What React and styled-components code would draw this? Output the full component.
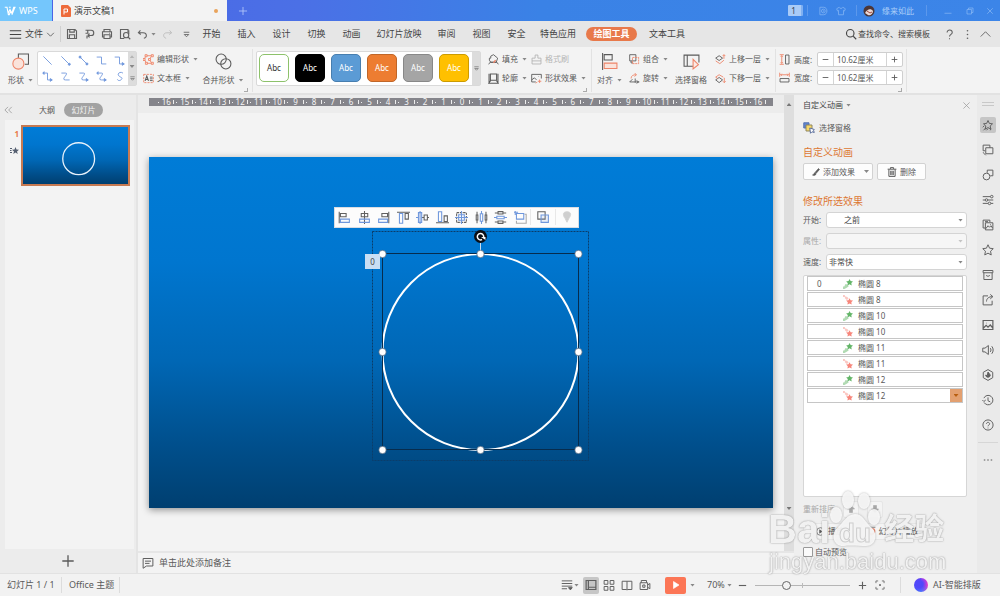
import React from "react";
import styled, { createGlobalStyle, css } from "styled-components";

const SLIDE_W = 624;
const SLIDE_H = 351;

const c = {
  text: "#5a5a5a",
  dark: "#444",
  muted: "#a8a8a8",
  orange: "#e8794a",
  coral: "#ee8468",
  blue: "#6f97dc",
  line: "#d9d9d9",
  panel: "#efefef",
  canvas: "#f3f3f3",
};

const Global = createGlobalStyle`
  *, *::before, *::after { box-sizing: border-box; }
  body {
    margin: 0;
    font-family: "Noto Sans", "Noto Sans CJK SC", sans-serif;
    font-size: 8px;
    line-height: 12px;
    color: ${c.text};
    background: ${c.panel};
  }
  button, input, select {
    font: inherit;
    color: inherit;
    margin: 0;
    padding: 0;
    border: 0;
    background: none;
  }
  h1, h2, p, ul { margin: 0; padding: 0; font-weight: 400; }
  ul { list-style: none; }
`;

/* ---------- icons ---------- */

const O = c.coral;
const star = "M8 2l1.8 3.9 4.2.5-3.1 2.9.8 4.2L8 11.4l-3.7 2.1.8-4.2L2 6.400l4.200-.5z";

const icons = {
  menu: <path d="M1 3.500h14M1 8h14M1 12.500h14" />,
  down: <path d="M2 5l6 6 6-6" />,
  up: <path d="M1 11l7-7 7 7" />,
  save: <path d="M2 2h10l2 2v10H2zM5 2v3.500h6V2M4.500 14V9h7v5" />,
  export: <path d="M2 3h7.500a3.500 3.500 0 010 7H5M5 3v4M2 7h4M5 10l2.500-2.500M5 10l2.500 2.500M4 10v4" />,
  print: <path d="M4 5V2h8v3M4 12H2V5h12v7h-2M4 9h8v5H4zM11 7h1" />,
  preview: <><path d="M7 14H2V2h10v4" /><circle cx="9.500" cy="9.500" r="3.500" /><path d="M12 12l3 3M13 8V3" /></>,
  undo: <path d="M5 2L2 5.500 5.500 8M2 5.500h7c6 0 6 7 1 8" />,
  redo: <path d="M11 2l3 3.500L10.500 8M14 5.500H7c-6 0-6 7-1 8" />,
  more: <path d="M3 4h10M4 8l4 4 4-4z" />,
  search: <><circle cx="7" cy="7" r="5" /><path d="M11 11l4 4" /></>,
  help: <path d="M4.500 5c0-5 7.500-4.500 7.500 0 0 2.800-4 2.800-4 6M8 13.500v1.500" />,
  dots: <g fill="currentColor" stroke="none"><circle cx="8" cy="2.500" r="1.200" /><circle cx="8" cy="8" r="1.200" /><circle cx="8" cy="13.500" r="1.200" /></g>,
  ellipsis: <g fill="currentColor" stroke="none"><circle cx="2.500" cy="8" r="1.500" /><circle cx="8" cy="8" r="1.500" /><circle cx="13.500" cy="8" r="1.500" /></g>,
  plus: <path d="M8 1.500v13M1.500 8h13" />,
  minus: <path d="M1.500 8h13" />,
  close: <path d="M2.500 2.500l11 11M13.500 2.500l-11 11" />,
  minimize: <path d="M1 12.500h14" />,
  restore: <path d="M2 5h9v9H2zM5 5V2h9v9h-3" />,
  collapse: <path d="M8 3L3 8l5 5M14 3L9 8l5 5" />,
  arrowUp: <path d="M8 1l7 7h-4v7H5V8H1z" fill="currentColor" />,
  arrowDown: <path d="M8 15l7-7h-4V1H5v7H1z" fill="currentColor" />,
  skin: <path d="M5 2L1 4.500 2.500 8 4 7v7h8V7l1.500 1L15 4.500 11 2c-1 2.500-5 2.500-6 0z" />,
  doc: <><path d="M3 14V2h6c7 0 7 12 0 12z" /><circle cx="8.500" cy="8" r="3" /><circle cx="8.500" cy="8" r=".5" /></>,
  wps: <path d="M1 3h3l1.500 8L8 6l2.500 5L13 3h2.500M4 3l2 10h1l2-5M10.500 13l4-10M9 3H6.500" strokeWidth="1.500" />,
  shapes: <><path d="M6 6V1h9.500v9.500H12" /><circle cx="6" cy="10" r="5.200" stroke={O} fill="#fae3db" /></>,
  editShape: <><path d="M4 2.500h9L9 8l4 5.500H5L2 8z" stroke={O} /><path d="M12 1h3v3h-3zM12 12h3v3h-3zM0 6.500h3v3H0zM3 1h3v3H3zM3.500 12h3v3h-3zM8 6.500h3v3H8z" fill="#fbe6de" stroke={O} /></>,
  textBox: <><path d="M1 2h14v12H1z" stroke={O} strokeDasharray="3 1.500" /><path d="M3 11.500L5.500 4.500 8 11.500M4 9.500h3" strokeWidth="1.600" /><path d="M10 6h4M10 8.500h4M10 11h4" /></>,
  merge: <><circle cx="5.800" cy="5.800" r="4.800" /><circle cx="10.200" cy="10.200" r="4.800" /></>,
  fill: <><path d="M2 6h2V3l4-2 6 5-2 6H4L2 9zM1 15l2-3h10l2 3" /><path d="M11 9l-3 4" stroke={O} strokeWidth="2" /></>,
  outline: <path d="M3.500 1.500h9v9h-9zM3.500 12v-.500L1 15h14l-2.500-3.500M1.500 1v13M14.500 1v13" strokeWidth="1.500" />,
  painter: <path d="M6 6V1.500h4V6h4.500v8.500h-13V6zM1.500 10h13" />,
  effect: <><path d="M7 13H1V2h14v6M1 10l4-3 3 3M11 5v.5" /><path d="M10 12h5M12.500 9.500v5M7 15l2-2" stroke={O} /></>,
  align: <><path d="M1.500 0v16M3 1.500h7.500v5H3z" /><path d="M3 9.500h12v5H3z" stroke={O} fill="#fae3db" /></>,
  group: <><path d="M1 1h9v9H1zM3 10v3h3" /><path d="M5 5h9v9H5z" stroke={O} strokeDasharray="3 1" /></>,
  rotate: <><path d="M3 8c0-4 3-5.500 7-5.500M8 0l3 2.500L8 5" stroke={O} /><path d="M15 13H1l4-4M9 8v6M11 11l3 2-3 2" /></>,
  pane: <><path d="M10 12.500H1V2h14v7M4 2v10.500" /><path d="M9.500 6v9l5-4z" stroke={O} fill="#fbeae4" /></>,
  raise: <><path d="M1 6l5-3.500L11 6 6 9.500z" /><path d="M1 10l6 4 6-5M13 7V1M11 3l2-2 2 2" stroke={O} /></>,
  lower: <><path d="M1 6l5-3.500L12 6" stroke={O} /><path d="M1 10l5-3.500 5 3.500-5 4z" /><path d="M1 6l3 2M13.500 7v7M11.500 12l2 2 2-2" stroke={O} /></>,
  height: <><path d="M9.500 1.500h5v13h-5z" /><path d="M1 1h6M1 15h6M4 2v12M2.500 4L4 2.500 5.500 4M2.500 12L4 13.500 5.500 12" stroke={O} /></>,
  width: <><path d="M1.500 9.500h13v5h-13z" /><path d="M1 1v6M15 1v6M2 4h12M4 2.500L2.500 4 4 5.500M12 2.500L13.500 4 12 5.500" stroke={O} /></>,
  l1: <path d="M2 2l12 12" />,
  l2: <><path d="M2 2l11 11" /><circle cx="13.500" cy="13.500" r="1.500" fill="currentColor" /></>,
  l3: <><path d="M3 3l10 10" /><circle cx="3" cy="3" r="1.500" fill="currentColor" /><circle cx="13" cy="13" r="1.500" fill="currentColor" /></>,
  l4: <path d="M1 3h7v10h7" />,
  l5: <><path d="M1 3h7v10h6" /><path d="M12 11l3 2-3 2z" fill="currentColor" /></>,
  l6: <><path d="M2 3h6v10h6" /><path d="M12 11l3 2-3 2zM3 1L1 3l2 2z" fill="currentColor" /></>,
  l7: <path d="M2 3h6c6 0-8 10 0 10h6" />,
  l8: <><path d="M2 3h6c6 0-8 10 0 10h5" /><path d="M12 11l3 2-3 2z" fill="currentColor" /></>,
  l9: <><path d="M3 3h5c6 0-8 10 0 10h5" /><path d="M12 11l3 2-3 2zM3 1L1 3l2 2z" fill="currentColor" /></>,
  l10: <path d="M13 3c-4-3-9 1-6 4s6 2 4 5-6 2-6 0" />,
  brush: <><path d="M6 9l7-8 2 2-7 8z" fill="currentColor" /><path d="M6 10c-3 0-2 4-5 4 3 2 7 0 7-2z" fill="currentColor" /></>,
  trash: <path d="M1 3.500h14M5.500 3V1h5v2M3 4v11h10V4M6 6v7M8 6v7M10 6v7" strokeWidth="1.600" />,
  panes: <><path d="M1 1h7v7H1z" fill="#5f83cf" stroke="#5875b0" /><path d="M4 4h8v8H4z" fill="#f7d868" stroke="#8c8460" /><path d="M9 8l1 7 2-2 3 1-1-3 1-1z" fill="#fff" stroke="#556a99" /></>,
  railAnim: <><path d={star} /><path d="M1 11l2-2M2 15l3-3M6 15l2-2M11 15l1-2" /></>,
  railCopy: <path d="M4 9H1.500V1.500h9V5M5 5h9.500v8H5zM3 13l-1.500-2M5 15l-2-2" />,
  railShape: <><path d="M7 5V1.500h7.500v7.500H11" /><circle cx="6" cy="10" r="4.500" /></>,
  railSet: <><path d="M1 3.500h10M1 8h3M8 8h7M1 12.500h7M12 12.500h3" /><circle cx="13" cy="3.500" r="1.700" /><circle cx="6" cy="8" r="1.700" /><circle cx="10" cy="12.500" r="1.700" /></>,
  railPics: <path d="M4 12H1.500V1.500h9V4M4.500 5h10v9.500h-10zM5 13l3-4 2 2 2-2 2 3M11 7.500h1M4 3.500h4" />,
  railStar: <path d="M8 1l2.100 4.600 4.900.6-3.600 3.400.9 5L8 12.200l-4.300 2.400.9-5L1 6.200l4.900-.6z" />,
  railBox: <path d="M1.500 2h13v3h-13zM2.500 5v9h11V5M5.500 8.500c1.500 1.500 3.500 1.500 5 0" />,
  railShare: <path d="M8 2.500H1.500v12h12V9M6 10c0-4 3-6.500 8-6.500M11 .5l3.500 3-3.500 3" />,
  railImage: <path d="M1.500 2h13v12h-13zM2 12l3.500-3.500L8 11l3-3 3.500 4M6 5.500h.5" strokeWidth="1.600" />,
  railSound: <path d="M1 5.500h3L8.500 2v12L4 10.500H1zM11 5.500c1.300 1.500 1.300 3.500 0 5M13 3c2.500 3 2.500 7 0 10" />,
  railHex: <><path d="M8 .8l6.300 3.600v7.200L8 15.200l-6.300-3.600V4.400z" /><path d="M8 4l3 4c0 4-6 4-6 0l2 1z" fill="currentColor" /></>,
  railClock: <path d="M2.500 5.500a6.300 6.300 0 11.3 5.800M.5 8l2 2 2.500-2M8 4.500V9l3 1.500" />,
  railHelp: <><circle cx="8" cy="8" r="6.800" /><path d="M6 6.500c0-3 4.200-2.500 4.200 0 0 1.500-2.200 1.500-2.200 3.200M8 11.500v1" /></>,
  note: <path d="M1.500 2h13v10H6l-4.500 3zM4 5.500h8M4 8.500h6" />,
  lines: <><path d="M1 2.500h14M1 6h14M1 9.500h14M1 13h7" /><path d="M10 11.500h5l-2.500 3z" fill="currentColor" /></>,
  normal: <path d="M1.500 2h13v12h-13zM4.500 2v12M4.500 11h10" strokeWidth="1.600" />,
  grid: <path d="M1.500 2h5v5h-5zM9.500 2h5v5h-5zM1.500 10h5v5h-5zM9.500 10h5v5h-5z" />,
  book: <path d="M8 3v11.500M8 3H1.500v11H7l1 .8 1-.8h5.500V3z" />,
  camera: <path d="M3 5V2h7v3M1.500 5h10v9h-10zM11.500 8l3-2v7l-3-2M5 8h3v3H5z" />,
  fit: <><path d="M1.500 5V1.500H5M11 1.500h3.500V5M14.500 11v3.500H11M5 14.500H1.500V11" /><circle cx="8" cy="8" r="1" fill="currentColor" /></>,
  play: <path d="M3 1v14l11-7z" fill="currentColor" />,
  playRing: <><circle cx="8" cy="8" r="6.800" /><path d="M6.500 5v6l4-3z" fill="currentColor" /></>,
  screen: <><path d="M1 2h14M3 2v8h3M8 13v2" stroke="#666" /><circle cx="9.500" cy="8.500" r="4.500" stroke="#ee8468" strokeWidth="2" /></>,
  tLeft: <><path d="M1.500 1v14M3 3h7v4H3z" /><path d="M3 10h11v4H3z" stroke={c.blue} /></>,
  tCenter: <><path d="M8 0v16M4 3h8v4H4z" /><path d="M2 10h12v4H2z" stroke={c.blue} /></>,
  tRight: <><path d="M14.500 1v14M6 3h7v4H6z" /><path d="M2 10h11v4H2z" stroke={c.blue} /></>,
  tTop: <><path d="M0 1.500h16M10 3h4v7h-4z" /><path d="M3 3h4v12H3z" stroke={c.blue} /></>,
  tMiddle: <><path d="M7 8h3M10 5h4v6h-4zM14 8h2" /><path d="M3 2h4v12H3zM0 8h3M5 0v16" stroke={c.blue} /></>,
  tBottom: <><path d="M0 14.500h16M10 6h4v7h-4z" /><path d="M3 1h4v12H3z" stroke={c.blue} /></>,
  tCross: <><path d="M2 2h12v12H2z" strokeDasharray="3 1" /><path d="M8 0v16M0 8h16M4.500 4.500h7v7h-7z" stroke={c.blue} /></>,
  tDistH: <><path d="M1.500 5h2v6h-2zM12.500 5h2v6h-2zM2.500 1v4M2.500 11v4M13.500 1v4M13.500 11v4" /><path d="M6.500 3.500h3v9h-3zM8 0v3M8 13v3" stroke={c.blue} /></>,
  tDistV: <><path d="M5 .8h6v3H5zM5 12.200h6v3H5zM1 2.500h4M11 2.500h4M1 13.500h4M11 13.500h4" /><path d="M3.500 6.500h9v3h-9zM0 8h3M13 8h3" stroke={c.blue} /></>,
  tCrop: <><path d="M3 12v3h12V4h-2" stroke="#aaa" /><path d="M3 3h9v7H3zM0 1.500h5M1.500 0v5" stroke={c.blue} /></>,
  tGroup: <><path d="M1 1h9v9H1z" /><path d="M5 5h9v9H5z" stroke={c.blue} fill="#7fa5e022" /></>,
  bulb: <path d="M8 1c-7 0-5 6-2.500 9L8 15l2.500-5C13 7 15 1 8 1z" fill="#cfcfcf" stroke="#d4d4d4" />,
};

const Svg = styled.svg`
  display: block;
  flex: none;
  fill: none;
  stroke: currentColor;
  stroke-width: ${(p) => p.$stroke || 1.3};
`;

const Icon = ({ name, size = 12, stroke }) => (
  <Svg width={size} height={size} viewBox="0 0 16 16" $stroke={stroke} aria-hidden="true">
    {icons[name]}
  </Svg>
);

const Caret = styled.i`
  flex: none;
  width: 5px;
  height: 3px;
  background: ${(p) => p.$color || "#888"};
  clip-path: ${(p) => (p.$up ? "polygon(50% 0, 100% 100%, 0 100%)" : "polygon(0 0, 100% 0, 50% 100%)")};
`;

/* ---------- shell ---------- */

const Shell = styled.div`
  display: flex;
  flex-direction: column;
  min-height: 100vh;
  overflow: hidden;
`;
const Spacer = styled.div`
  flex: 1;
`;
const Gap = styled.i`
  flex: none;
  width: ${(p) => p.$w}px;
`;
const Divider = styled.i`
  flex: none;
  width: 1px;
  height: ${(p) => p.$h || 16}px;
  background: ${(p) => p.$color || "#dcdcdc"};
`;
const IconButton = styled.button`
  display: flex;
  align-items: center;
  justify-content: center;
  flex: none;
  width: ${(p) => p.$w || 18}px;
  height: ${(p) => p.$h || 16}px;
  color: ${(p) => p.$color || "#606060"};
  background: ${(p) => (p.$active ? "#c6c6c6" : "none")};
  border-radius: 2px;
`;

const TitleBar = styled.header`
  display: flex;
  align-items: center;
  height: 21px;
  background: linear-gradient(90deg, #4a62e6 0, #4b70e6 30%, #3a82e6 54%, #3c85e8 100%);
  color: #a9cdf8;
`;
const Brand = styled.button`
  display: flex;
  align-items: center;
  gap: 3px;
  width: 52px;
  height: 21px;
  padding-left: 4px;
  color: #fff;
  font-size: 9px;
  background: #74c6fc;
`;
const DocTab = styled.div`
  display: flex;
  align-items: center;
  gap: 3px;
  width: 174px;
  height: 21px;
  margin-left: 1px;
  padding: 0 9px 0 8px;
  font-size: 9px;
  color: ${c.dark};
  background: #f3f3f3;
`;
const Dot = styled.i`
  width: 4px;
  height: 4px;
  border-radius: 50%;
  background: #e9a35c;
`;
const Count = styled.span`
  width: 15px;
  height: 11px;
  margin-right: 4px;
  padding-right: 2px;
  border-right: 2px solid #7fb0f2;
  border-radius: 1px;
  text-align: center;
  line-height: 11px;
  color: #345;
  background: #a9cbf7;
`;
const User = styled.button`
  display: flex;
  align-items: center;
  gap: 7px;
  width: 69px;
  padding-left: 6px;
`;

const MenuBar = styled.nav`
  display: flex;
  align-items: center;
  height: 26px;
  padding: 0 6px 0 9px;
  font-size: 9px;
  color: ${c.dark};
  background: #e6e6e6;
`;
const FileButton = styled.button`
  display: flex;
  align-items: center;
  gap: 3px;
  width: 51px;
`;
const MenuTab = styled.button`
  width: ${(p) => ({ 2: 35, 4: 48, 5: 60 }[p.$chars])}px;
  white-space: nowrap;
  text-align: center;
  ${(p) =>
    p.$active &&
    css`
      width: 51px;
      height: 14px;
      margin: 0 6px 0 4px;
      border-radius: 7px;
      color: #fff;
      font-weight: 700;
      background: ${c.orange};
    `}
`;
const Search = styled.button`
  display: flex;
  align-items: center;
  gap: 1px;
  width: 95px;
  font-size: 8px;
  white-space: nowrap;
`;

/* ---------- ribbon ---------- */

const Ribbon = styled.section`
  display: flex;
  height: 48px;
  border-bottom: 2px solid #e2e2e2;
  background: #f3f3f3;
`;
const Group = styled.div`
  display: flex;
  flex: none;
  width: ${(p) => p.$w}px;
  height: 43px;
  margin-top: 2px;
  padding: 2px 0 0 ${(p) => p.$pad || 4}px;
  border-right: 1px solid #e2e2e2;
  background: linear-gradient(#aaa, #aaa) right 4px bottom 0 / 4px 1px no-repeat,
    linear-gradient(#aaa, #aaa) right 4px bottom 0 / 1px 4px no-repeat;
  ${(p) => p.$plain && "background: none;"}
`;
const BigButton = styled.button`
  display: flex;
  flex-direction: column;
  align-items: center;
  justify-content: space-between;
  flex: none;
  width: ${(p) => p.$w}px;
  height: 35px;
  padding-top: 2px;
`;
const Label = styled.span`
  display: flex;
  align-items: center;
  gap: 4px;
  white-space: nowrap;
`;
const Stack = styled.div`
  display: flex;
  flex-direction: column;
  justify-content: space-between;
  flex: none;
  width: ${(p) => p.$w}px;
  height: 35px;
  padding: 1px 0;
`;
const SmallButton = styled.button`
  display: flex;
  align-items: center;
  gap: 3px;
  height: 14px;
  color: ${(p) => (p.disabled ? "#b4b4b4" : "inherit")};
`;
const Gallery = styled.div`
  display: flex;
  flex: none;
  height: 35px;
  border: 1px solid ${c.line};
  border-radius: 2px;
  background: #fff;
`;
const LineGrid = styled.div`
  display: grid;
  grid-template-columns: repeat(5, 18px);
  align-content: space-around;
`;
const GalleryScroll = styled.div`
  display: flex;
  flex-direction: column;
  align-items: center;
  justify-content: space-around;
  width: 8px;
  background: #dcdcdc;
`;
const Swatches = styled.div`
  display: flex;
  gap: 6px;
  padding: 2px 3px 0 2px;
`;
const Swatch = styled.button`
  width: 30px;
  height: 28px;
  border: 1px solid ${(p) => p.$edge};
  border-radius: 5px;
  color: ${(p) => p.$ink || "#fff"};
  background: ${(p) => p.$bg};
`;
const SizeRow = styled.label`
  display: flex;
  align-items: center;
  gap: 4px;
  height: 15px;
`;
const SizeName = styled.span`
  width: 19px;
  white-space: nowrap;
`;
const Stepper = styled.span`
  display: flex;
  width: 86px;
  height: 15px;
  border: 1px solid #cfcfcf;
  border-radius: 2px;
  background: #fff;
`;
const StepButton = styled.button`
  display: flex;
  align-items: center;
  justify-content: center;
  width: 15px;
`;
const StepInput = styled.input`
  width: 54px;
  padding-left: 3px;
  border: solid #d4d4d4;
  border-width: 0 1px;
`;

/* ---------- body ---------- */

const Body = styled.main`
  display: flex;
  flex: 1;
`;
const Outline = styled.aside`
  display: flex;
  flex-direction: column;
  flex: none;
  width: 138px;
  padding: 0 2px 0 5px;
  border-right: 2px solid #e4e4e4;
  background: #ececec;
`;
const OutlineHead = styled.div`
  display: flex;
  align-items: center;
  height: 25px;
  padding-top: 4px;
`;
const OutlineTab = styled.button`
  width: ${(p) => (p.$active ? 39 : 34)}px;
  height: 14px;
  border-radius: 7px;
  color: ${(p) => (p.$active ? "#f4f4f4" : "#555")};
  background: ${(p) => (p.$active ? "#a2a2a2" : "none")};
`;
const ThumbList = styled.div`
  display: flex;
  align-items: flex-start;
  flex: 1;
  padding: 5px 1px 0 4px;
  background: ${c.canvas};
`;
const ThumbMeta = styled.div`
  display: flex;
  flex-direction: column;
  align-items: flex-end;
  gap: 6px;
  width: 12px;
  padding: 3px 2px 0 0;
  color: ${c.orange};
`;
const slideFill = "linear-gradient(#007cd7 0, #0076cf 30%, #0067b5 58%, #004f8c 82%, #003f70 100%)";
const Thumb = styled.button`
  flex: none;
  width: 109px;
  height: 61px;
  border: 2px solid #c77a52;
  background: ${slideFill};
`;
const AddSlide = styled.button`
  display: flex;
  align-items: center;
  justify-content: center;
  height: 24px;
  padding-right: 4px;
`;

const Center = styled.section`
  display: flex;
  flex-direction: column;
  flex: 1;
  min-width: 0;
`;
const Stage = styled.div`
  display: flex;
  flex: 1;
`;
const Work = styled.div`
  display: flex;
  flex-direction: column;
  flex: 1;
`;
const RulerRow = styled.div`
  height: 18px;
  padding: 3px 11px 0;
  background: #ececec;
`;
const Ruler = styled.div`
  display: flex;
  height: 8px;
  padding: 0 7px;
  color: #f6f6f6;
  line-height: 8px;
  background: #85858b;
`;
const RulerCell = styled.span`
  display: flex;
  align-items: center;
  justify-content: space-between;
  flex: 1 1 0;
  min-width: 0;
  padding-left: 2px;

  &::before,
  &::after {
    content: "";
    width: 1px;
    height: 1px;
    background: #eee;
  }
  &::after {
    height: 4px;
  }
`;
const Canvas = styled.div`
  display: flex;
  align-items: center;
  flex: 1;
  padding: 0 11px;
  background: ${c.canvas};
`;
const Slide = styled.div`
  position: relative;
  flex: 1;
  aspect-ratio: ${SLIDE_W} / ${SLIDE_H};
  background: ${slideFill};
  box-shadow: 0 2px 7px rgba(0, 0, 0, 0.4);
`;
const Drawing = styled.svg`
  display: block;
  width: 100%;
  height: 100%;
`;
const at = (x, y) => css`
  position: absolute;
  left: ${(x / SLIDE_W) * 100}%;
  top: ${(y / SLIDE_H) * 100}%;
`;
const FloatBar = styled.div`
  ${at(185, 50)}
  display: flex;
  align-items: center;
  width: 245px;
  height: 21px;
  border: 1px solid #d8dde4;
  background: #fcfcfc;
`;
const FloatTool = styled(IconButton)`
  flex: 1;
  width: auto;
`;
const OrderBadge = styled.span`
  ${at(216, 97)}
  width: 15px;
  height: 15px;
  text-align: center;
  line-height: 15px;
  color: #444;
  background: #c9def4;
`;
const Scroll = styled.div`
  display: flex;
  flex-direction: column;
  align-items: center;
  justify-content: space-between;
  width: 10px;
  padding: 8px 0 41px;
  background: #dedede;
`;
const Notes = styled.button`
  display: flex;
  align-items: center;
  gap: 5px;
  height: 22px;
  padding-left: 4px;
  border-top: 2px solid #e6e6e6;
  font-size: 9px;
  background: ${c.canvas};
`;

/* ---------- animation pane ---------- */

const Pane = styled.aside`
  display: flex;
  flex-direction: column;
  flex: none;
  width: 183px;
  padding: 0 10px 0 9px;
  background: ${c.panel};
`;
const Row = styled.div`
  display: flex;
  align-items: center;
  gap: ${(p) => p.$gap || 4}px;
  height: ${(p) => p.$h || 20}px;
  color: ${(p) => (p.$off ? c.muted : c.text)};
`;
const PaneTitle = styled.h1`
  display: flex;
  align-items: center;
  gap: 3px;
  font-size: 8px;
  color: #444;
`;
const Heading = styled.h2`
  height: 22px;
  line-height: 22px;
  font-size: 10px;
  color: #dd7733;
`;
const PushButton = styled.button`
  display: flex;
  align-items: center;
  justify-content: center;
  gap: 3px;
  width: ${(p) => p.$w}px;
  height: 17px;
  padding: ${(p) => (p.$menu ? "0 3px 0 8px" : "0")};
  border: 1px solid ${(p) => (p.$flat ? "#e6e6e6" : "#d2d2d2")};
  border-radius: 2px;
  white-space: nowrap;
  background: ${(p) => (p.$flat ? "#f4f4f4" : "#fdfdfd")};
`;
const FieldRow = styled.label`
  display: flex;
  align-items: center;
  height: 16px;
  margin-bottom: 5px;
  color: ${(p) => (p.$off ? c.muted : c.text)};
`;
const FieldName = styled.span`
  width: 23px;
  white-space: nowrap;
`;
const SelectBox = styled.span`
  display: flex;
  align-items: center;
  flex: 1;
  height: 16px;
  padding-right: 3px;
  border: 1px solid #d4d4d4;
  border-radius: 3px;
  background: ${(p) => (p.$off ? "#f6f6f6" : "#fff")};
`;
const Select = styled.select`
  flex: 1;
  appearance: none;
  outline: 0;
  padding-left: ${(p) => p.$indent || 2}px;
  color: #444;
`;
const EffectList = styled.ul`
  flex: 1;
  padding: 0 3px;
  border: 1px solid #d6d6d6;
  border-radius: 2px;
  background: #fff;
`;
const Effect = styled.li`
  display: grid;
  grid-template-columns: 35px 15px 1fr 12px;
  align-items: center;
  height: 15px;
  margin-bottom: 1px;
  border: 1px solid #c6c6c6;
  background: #fff;
`;
const Order = styled.span`
  padding-left: 9px;
`;
const EffectMenu = styled.button`
  display: flex;
  align-items: center;
  justify-content: center;
  height: 13px;
  background: #e3a070;
`;
const Check = styled.label`
  display: flex;
  align-items: center;
  gap: 2px;
  height: 21px;
`;
const Box = styled.input`
  appearance: none;
  width: 10px;
  height: 10px;
  border: 1px solid #999;
  border-radius: 1px;
  background: #fafafa;
`;

const Rail = styled.nav`
  display: flex;
  flex-direction: column;
  align-items: center;
  gap: 9px;
  flex: none;
  width: 23px;
  padding-right: 2px;
  background: #eaeaea;
`;
const Grip = styled.i`
  width: 12px;
  height: 4px;
  margin: 7px 0 2px;
  border: solid #c8c8c8;
  border-width: 1px 0;
`;
const RailLine = styled.i`
  width: 20px;
  height: 1px;
  background: #d6d6d6;
`;

/* ---------- status bar ---------- */

const Status = styled.footer`
  display: flex;
  align-items: center;
  height: 23px;
  padding: 0 20px 0 7px;
  border-top: 1px solid #e2e2e2;
  background: #f2f2f2;
`;
const StatusItem = styled.span`
  flex: none;
  width: ${(p) => p.$w}px;
  font-size: 9px;
  white-space: nowrap;
`;
const PlayButton = styled.button`
  display: flex;
  align-items: center;
  justify-content: center;
  width: 21px;
  height: 17px;
  margin: 0 4px 0 10px;
  border-radius: 2px;
  color: #fff;
  background: #fc7656;
`;
const Zoom = styled.input`
  appearance: none;
  width: 95px;
  height: 10px;
  margin: 0 3px;
  background: linear-gradient(#bbb, #bbb) 50% 50% / 1px 5px no-repeat,
    linear-gradient(#b5b5b5, #b5b5b5) center / 100% 1px no-repeat;

  &::-webkit-slider-thumb {
    appearance: none;
    width: 9px;
    height: 9px;
    border: 1px solid #666;
    border-radius: 50%;
    background: #f2f2f2;
  }
`;
const Orb = styled.i`
  width: 14px;
  height: 14px;
  margin: 0 5px 0 13px;
  border-radius: 50%;
  background: radial-gradient(circle at 40% 45%, #5148fa 0 30%, transparent 70%),
    conic-gradient(#c13be8, #e63cc8, #4a7cff, #4b4cf8, #7d3df0);
`;

/* ---------- watermark ---------- */

const Watermark = styled.div`
  position: fixed;
  right: 50px;
  bottom: 18px;
  width: 182px;
  height: 90px;
  pointer-events: none;
  color: rgba(252, 252, 252, 0.9);
  font-family: "Liberation Sans", "Noto Sans CJK SC", sans-serif;
  text-shadow: 0 0 1px rgba(120, 120, 120, 0.7), 0 0 2px rgba(120, 120, 120, 0.5);
`;
const MarkRow = styled.div`
  display: flex;
  align-items: flex-end;
  height: 60px;
  font-size: 40px;
  font-weight: 700;
  line-height: 38px;
`;
const MarkHan = styled.span`
  font-size: 30px;
`;
const MarkUrl = styled.div`
  padding-left: 1px;
  font-size: 22px;
  line-height: 28px;
`;
const Paw = styled.svg`
  flex: none;
  width: 54px;
  height: 58px;
  overflow: visible;
  filter: drop-shadow(0 0 1px rgba(120, 120, 120, 0.6));
`;
const PawText = styled.text`
  font: 700 26px "Liberation Sans", sans-serif;
  fill: #f4f4f4;
  stroke: #cfcfcf;
  text-shadow: none;
`;

/* ---------- data ---------- */

const tabs = ["开始", "插入", "设计", "切换", "动画", "幻灯片放映", "审阅", "视图", "安全", "特色应用"];
const swatches = [
  ["#fff", "#8dc26b", "#333"],
  ["#000", "#000"],
  ["#5b9bd5", "#477eaf"],
  ["#ed7d31", "#c06628"],
  ["#a5a5a5", "#888"],
  ["#ffc000", "#cc9b00"],
];
const floatTools = [
  ["tLeft", "左对齐"], ["tCenter", "水平居中"], ["tRight", "右对齐"], ["tTop", "顶端对齐"], ["tMiddle", "垂直居中"],
  ["tBottom", "底端对齐"], ["tCross", "中心对齐"], ["tDistH", "横向分布"], ["tDistV", "纵向分布"], ["tCrop", "等尺寸"],
];
const railIcons = [
  ["railAnim", "动画窗格"], ["railCopy", "切换"], ["railShape", "形状"], ["railSet", "设置"], ["railPics", "图库"],
  ["railStar", "收藏"], ["railBox", "素材"], ["railShare", "分享"], ["railImage", "图片"], ["railSound", "声音"],
  ["railHex", "工具"], ["railClock", "历史"], ["railHelp", "帮助"],
];
const effects = [8, 8, 10, 10, 11, 11, 12, 12];
const handles = [
  [233.5, 97], [331.5, 97], [429.5, 97], [233.5, 195], [429.5, 195], [233.5, 293], [331.5, 293], [429.5, 293],
];

const EffectStar = ({ exit }) => (
  <svg width="10" height="10" viewBox="0 0 16 16" aria-hidden="true">
    {exit ? (
      <g fill="#f7867b">
        <path d="M10.500 5l1.700 3.300 3.800.5-2.700 2.600.6 3.800-3.400-1.800-3.400 1.800.6-3.800L5 8.800l3.800-.5z" />
        <path d="M0 0h3v3H0zM3 2l4 1 2 3-3 2-3-3z" opacity=".45" />
      </g>
    ) : (
      <g fill="#63b568">
        <path d="M10.500 0l1.700 3.300 3.800.5-2.700 2.600.6 3.800-3.400-1.800-3.400 1.800.6-3.800L5 3.800l3.800-.5z" />
        <path d="M4 8l4 1 1 3-5 3-3-1zM0 12h3v4H0z" opacity=".5" />
      </g>
    )}
  </svg>
);

const Tool = ({ icon, children, disabled, caret = true }) => (
  <SmallButton disabled={disabled}>
    <Icon name={icon} size={11} />
    <Label>
      {children}
      {caret && <Caret />}
    </Label>
  </SmallButton>
);

const Size = ({ icon, name }) => (
  <SizeRow>
    <Icon name={icon} size={11} />
    <SizeName>{name}:</SizeName>
    <Stepper>
      <StepButton aria-label={`减小${name}`}><Icon name="minus" size={7} stroke={2} /></StepButton>
      <StepInput aria-label={name} defaultValue="10.62厘米" />
      <StepButton aria-label={`增大${name}`}><Icon name="plus" size={7} stroke={2} /></StepButton>
    </Stepper>
  </SizeRow>
);

const Field = ({ name, value, indent, off }) => (
  <FieldRow $off={off}>
    <FieldName>{name}:</FieldName>
    <SelectBox $off={off}>
      <Select $indent={indent} disabled={off} defaultValue={value}>
        <option>{value}</option>
      </Select>
      <Caret $color={off ? "#c4c4c4" : undefined} />
    </SelectBox>
  </FieldRow>
);

export default function App() {
  return (
    <Shell>
      <Global />
      <TitleBar>
        <Brand><Icon name="wps" size={12} />WPS</Brand>
        <DocTab>
          <svg width="10" height="12" viewBox="0 0 10 12" aria-hidden="true">
            <path d="M1 0h6l3 3v8a1 1 0 01-1 1H1a1 1 0 01-1-1V1a1 1 0 011-1z" fill="#ee6b3b" />
            <path d="M3 9.500V4h3.500v3H3" fill="none" stroke="#fff" />
          </svg>
          演示文稿1
          <Spacer />
          <Dot />
        </DocTab>
        <IconButton $w={32} $color="#b9cbfa" aria-label="新建"><Icon name="plus" size={10} /></IconButton>
        <Spacer />
        <Count>1</Count>
        <Divider $h={11} $color="#5c98ec" />
        <IconButton $w={30} $color="#7fb2f3" aria-label="文档"><Icon name="doc" size={10} /></IconButton>
        <IconButton $w={5} $color="#7fb2f3" aria-label="皮肤"><Icon name="skin" size={10} /></IconButton>
        <Gap $w={13} />
        <Divider $h={11} $color="#5c98ec" />
        <User>
          <svg width="12" height="12" viewBox="0 0 12 12" aria-hidden="true">
            <circle cx="6" cy="6" r="5.500" fill="#4c3638" />
            <path d="M2 8c2-4 6-5 8-2 0 3-3 5-5 4z" fill="#ead9d6" />
            <path d="M4 6l3 2 2-1" stroke="#a4473c" fill="none" />
          </svg>
          缘来如此
        </User>
        <Divider $h={11} $color="#5c98ec" />
        <Gap $w={9} />
        <IconButton $w={23} $color="#8fbcf5" aria-label="最小化"><Icon name="minimize" size={8} /></IconButton>
        <IconButton $w={21} $color="#8fbcf5" aria-label="还原"><Icon name="restore" size={8} /></IconButton>
        <IconButton $w={20} $color="#8fbcf5" aria-label="关闭"><Icon name="close" size={8} /></IconButton>
      </TitleBar>

      <MenuBar>
        <FileButton><Icon name="menu" size={13} />文件<Icon name="down" size={9} /></FileButton>
        <Divider $color="#cfcfcf" />
        <IconButton $w={22} aria-label="保存"><Icon name="save" size={12} stroke={1.5} /></IconButton>
        <IconButton $w={14} aria-label="输出"><Icon name="export" size={12} stroke={1.5} /></IconButton>
        <IconButton $w={20} aria-label="打印"><Icon name="print" size={12} stroke={1.5} /></IconButton>
        <IconButton $w={16} aria-label="预览"><Icon name="preview" size={12} stroke={1.5} /></IconButton>
        <IconButton $w={18} aria-label="撤销"><Icon name="undo" size={11} stroke={1.5} /></IconButton>
        <Caret />
        <IconButton $w={22} $color="#bcbcbc" aria-label="恢复"><Icon name="redo" size={11} /></IconButton>
        <IconButton $w={16} aria-label="更多"><Icon name="more" size={9} stroke={1.5} /></IconButton>
        {tabs.map((t) => <MenuTab key={t} $chars={t.length}>{t}</MenuTab>)}
        <MenuTab $chars={4} $active>绘图工具</MenuTab>
        <MenuTab $chars={4}>文本工具</MenuTab>
        <Spacer />
        <Search><Icon name="search" size={12} stroke={1.5} />查找命令、搜索模板</Search>
        <IconButton aria-label="帮助"><Icon name="help" size={11} stroke={1.5} /></IconButton>
        <IconButton aria-label="选项"><Icon name="dots" size={11} /></IconButton>
        <IconButton aria-label="折叠"><Icon name="up" size={11} /></IconButton>
      </MenuBar>

      <Ribbon>
        <Group $w={253}>
          <BigButton $w={33}><Icon name="shapes" size={17} stroke={1} /><Label>形状<Caret /></Label></BigButton>
          <Gallery>
            <LineGrid>
              {Array.from({ length: 10 }, (_, i) => (
                <IconButton key={i} $w={18} $color={c.blue} aria-label={`线条 ${i + 1}`}>
                  <Icon name={`l${i + 1}`} size={11} />
                </IconButton>
              ))}
            </LineGrid>
            <GalleryScroll><Caret $up $color="#b5b5b5" /><Caret /><Icon name="more" size={7} /></GalleryScroll>
          </Gallery>
          <Gap $w={6} />
          <Stack $w={58}>
            <Tool icon="editShape">编辑形状</Tool>
            <Tool icon="textBox">文本框</Tool>
          </Stack>
          <BigButton $w={44}><Icon name="merge" size={17} stroke={1} /><Label>合并形状<Caret /></Label></BigButton>
        </Group>
        <Group $w={339} $pad={3}>
          <Gallery>
            <Swatches>
              {swatches.map(([bg, edge, ink]) => (
                <Swatch key={bg} $bg={bg} $edge={edge} $ink={ink}>Abc</Swatch>
              ))}
            </Swatches>
            <GalleryScroll><Icon name="more" size={7} /></GalleryScroll>
          </Gallery>
          <Gap $w={7} />
          <Stack $w={43}>
            <Tool icon="fill">填充</Tool>
            <Tool icon="outline">轮廓</Tool>
          </Stack>
          <Stack $w={56}>
            <Tool icon="painter" disabled caret={false}>格式刷</Tool>
            <Tool icon="effect">形状效果</Tool>
          </Stack>
        </Group>
        <Group $w={184} $pad={4} $plain>
          <BigButton $w={27}><Icon name="align" size={17} stroke={1} /><Label>对齐<Caret /></Label></BigButton>
          <Gap $w={6} />
          <Stack $w={41}>
            <Tool icon="group">组合</Tool>
            <Tool icon="rotate">旋转</Tool>
          </Stack>
          <BigButton $w={42}><Icon name="pane" size={17} stroke={1} /><Label>选择窗格</Label></BigButton>
          <Gap $w={3} />
          <Stack $w={56}>
            <Tool icon="raise">上移一层</Tool>
            <Tool icon="lower">下移一层</Tool>
          </Stack>
        </Group>
        <Group $w={131} $pad={3}>
          <Stack $w={126}>
            <Size icon="height" name="高度" />
            <Size icon="width" name="宽度" />
          </Stack>
        </Group>
      </Ribbon>

      <Body>
        <Outline>
          <OutlineHead>
            <IconButton $w={6} $color="#999" aria-label="收起"><Icon name="collapse" size={10} /></IconButton>
            <Gap $w={19} />
            <OutlineTab>大纲</OutlineTab>
            <OutlineTab $active>幻灯片</OutlineTab>
          </OutlineHead>
          <ThumbList>
            <ThumbMeta>
              <b>1</b>
              <svg width="9" height="9" viewBox="0 0 18 16" fill="#555f70" aria-hidden="true">
                <path d="M11 1l2 5 5 .5-4 3.500 1.500 5-4.500-3-4.500 3L8 10 4 6.500 9 6zM0 3h4v2H0zM0 7h3v2H0zM0 11h4v2H0z" />
              </svg>
            </ThumbMeta>
            <Thumb aria-label="幻灯片 1">
              <Drawing viewBox={`0 0 ${SLIDE_W} ${SLIDE_H}`}>
                <circle cx="331.500" cy="195" r="98" fill="none" stroke="#e8f2fb" strokeWidth="8" />
              </Drawing>
            </Thumb>
          </ThumbList>
          <AddSlide aria-label="新建幻灯片"><Icon name="plus" size={14} stroke={1.5} /></AddSlide>
        </Outline>

        <Center>
          <Stage>
            <Work>
              <RulerRow>
                <Ruler>
                  {Array.from({ length: 33 }, (_, i) => <RulerCell key={i}>{Math.abs(i - 16)}</RulerCell>)}
                </Ruler>
              </RulerRow>
              <Canvas>
                <Slide>
                  <Drawing viewBox={`0 0 ${SLIDE_W} ${SLIDE_H}`}>
                    <rect x="223.500" y="74.500" width="216" height="229" fill="none" stroke="#0b3d69" strokeDasharray="2 1" />
                    <circle cx="331.500" cy="195" r="98" fill="none" stroke="#fff" strokeWidth="2" />
                    <path d="M331.500 85v10" stroke="#cde" />
                    <rect x="233.500" y="96.500" width="196" height="196" fill="none" stroke="#072c4d" />
                    {handles.map(([x, y]) => (
                      <circle key={`${x}-${y}`} cx={x} cy={y} r="3.700" fill="#fff" stroke="#3a5876" strokeWidth=".7" />
                    ))}
                    <circle cx="331.500" cy="79.500" r="6.500" fill="#0a0f16" />
                    <path d="M333 82.500a3.200 3.200 0 111.700-2.500" fill="none" stroke="#fff" strokeWidth="1.500" />
                    <path d="M332 80h4.500v3z" fill="#fff" />
                  </Drawing>
                  <OrderBadge>0</OrderBadge>
                  <FloatBar>
                    {floatTools.map(([name, label]) => (
                      <FloatTool key={name} aria-label={label}><Icon name={name} size={13} /></FloatTool>
                    ))}
                    <Divider $color="#e8e8e8" />
                    <IconButton $w={24} aria-label="组合"><Icon name="tGroup" size={13} /></IconButton>
                    <Divider $color="#e8e8e8" />
                    <IconButton $w={22} aria-label="提示"><Icon name="bulb" size={12} /></IconButton>
                  </FloatBar>
                </Slide>
              </Canvas>
            </Work>
            <Scroll><Caret $up $color="#777" /><Caret $color="#777" /></Scroll>
          </Stage>
          <Notes><Icon name="note" size={12} />单击此处添加备注</Notes>
        </Center>

        <Pane>
          <Row>
            <PaneTitle>自定义动画<Caret /></PaneTitle>
            <Spacer />
            <IconButton $w={1} $color="#999" aria-label="关闭窗格"><Icon name="close" size={9} /></IconButton>
          </Row>
          <Row $h={26}><Icon name="panes" size={12} />选择窗格</Row>
          <Heading>自定义动画</Heading>
          <Row $h={17}>
            <PushButton $w={70} $menu><Icon name="brush" size={8} />添加效果<Spacer as="i" /><Caret /></PushButton>
            <PushButton $w={49}><Icon name="trash" size={10} />删除</PushButton>
          </Row>
          <Row $h={10} />
          <Heading>修改所选效果</Heading>
          <Field name="开始" value="之前" indent={17} />
          <Field name="属性" value="" off />
          <Field name="速度" value="非常快" />
          <EffectList>
            {effects.map((n, i) => (
              <Effect key={i}>
                <Order>{i === 0 ? "0" : ""}</Order>
                <EffectStar exit={i % 2 === 1} />
                <span>椭圆 {n}</span>
                {i === effects.length - 1 && <EffectMenu aria-label="效果选项"><Caret $color="#b85e10" /></EffectMenu>}
              </Effect>
            ))}
          </EffectList>
          <Row $h={24} $gap={8} $off>
            重新排序
            <PushButton $w={16} $flat aria-label="上移"><Icon name="arrowUp" size={8} /></PushButton>
            <PushButton $w={16} $flat aria-label="下移"><Icon name="arrowDown" size={8} /></PushButton>
          </Row>
          <Row>
            <PushButton $w={54} $flat><Icon name="playRing" size={9} />播放</PushButton>
            <PushButton $w={62} $flat><Icon name="screen" size={10} />幻灯片播放</PushButton>
          </Row>
          <Check><Box type="checkbox" />自动预览</Check>
          <Row $h={11} />
        </Pane>

        <Rail>
          <Grip />
          {railIcons.map(([name, label], i) => (
            <IconButton key={name} $w={16} $h={16} $active={i === 0} aria-label={label}>
              <Icon name={name} size={12} />
            </IconButton>
          ))}
          <RailLine />
          <IconButton $w={16} aria-label="更多" $color="#999"><Icon name="ellipsis" size={10} /></IconButton>
        </Rail>
      </Body>

      <Status>
        <StatusItem $w={54}>幻灯片 1 / 1</StatusItem>
        <Divider />
        <Gap $w={7} />
        <StatusItem $w={50}>Office 主题</StatusItem>
        <Divider />
        <Spacer />
        <IconButton $w={14} aria-label="备注"><Icon name="lines" size={12} /></IconButton>
        <Caret />
        <Gap $w={4} />
        <IconButton $w={16} $h={17} $active aria-label="普通视图"><Icon name="normal" size={12} /></IconButton>
        <IconButton $w={20} aria-label="浏览视图"><Icon name="grid" size={12} /></IconButton>
        <IconButton $w={16} aria-label="阅读视图"><Icon name="book" size={12} /></IconButton>
        <IconButton $w={20} aria-label="录制"><Icon name="camera" size={12} /></IconButton>
        <PlayButton aria-label="放映"><Icon name="play" size={8} /></PlayButton>
        <Caret />
        <Gap $w={12} />
        <StatusItem $w={20}>70%</StatusItem>
        <Caret />
        <IconButton $w={20} aria-label="缩小"><Icon name="minus" size={9} stroke={2} /></IconButton>
        <Zoom type="range" min="0" max="100" defaultValue="31" aria-label="缩放" />
        <IconButton $w={18} aria-label="放大"><Icon name="plus" size={9} stroke={2} /></IconButton>
        <IconButton $w={18} aria-label="适应窗口"><Icon name="fit" size={10} /></IconButton>
        <Gap $w={11} />
        <Divider />
        <Orb />
        <StatusItem $w={47}>AI-智能排版</StatusItem>
      </Status>

      <Watermark>
        <MarkRow>
          <span>Bai</span>
          <Paw viewBox="0 0 54 58">
            <g fill="rgba(252,252,252,.88)">
              <ellipse cx="6" cy="25" rx="6" ry="8" />
              <ellipse cx="18" cy="10" rx="6" ry="9" />
              <ellipse cx="34" cy="11" rx="6" ry="8" />
              <ellipse cx="44" cy="27" rx="6" ry="8" />
              <path d="M25 24c8 0 10 8 17 14 6 6 4 18-6 18-6 0-16-1-22 0-10 1-14-11-7-18 6-5 10-14 18-14z" />
            </g>
            <PawText x="9" y="52">du</PawText>
          </Paw>
          <MarkHan>经验</MarkHan>
        </MarkRow>
        <MarkUrl>jingyan.baidu.com</MarkUrl>
      </Watermark>
    </Shell>
  );
}
